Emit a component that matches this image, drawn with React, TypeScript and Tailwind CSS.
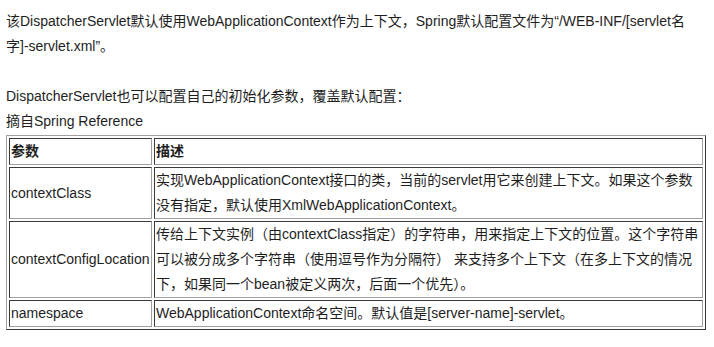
import React from 'react';

const rows: { name: string; desc: React.ReactNode }[] = [
  {
    name: 'contextClass',
    desc: (
      <>
        实现WebApplicationContext接口的类，当前的servlet用它来创建上下文。如果这个参数
        <br />
        没有指定，默认使用XmlWebApplicationContext。
      </>
    ),
  },
  {
    name: 'contextConfigLocation',
    desc: (
      <>
        传给上下文实例（由contextClass指定）的字符串，用来指定上下文的位置。这个字符串
        <br />
        可以被分成多个字符串（使用逗号作为分隔符） 来支持多个上下文（在多上下文的情况
        <br />
        下，如果同一个bean被定义两次，后面一个优先）。
      </>
    ),
  },
  {
    name: 'namespace',
    desc: <>WebApplicationContext命名空间。默认值是[server-name]-servlet。</>,
  },
];

const cell = 'border border-t-[#3a3a3a] border-l-[#3a3a3a] border-b-[#a0a0a0] border-r-[#a0a0a0] px-[1px] py-0 align-middle';

export default function App() {
  return (
    <div
      className="w-[714px] h-[347px] bg-white pl-[6px] text-[14px] text-[#1e1e1e] overflow-hidden"
      style={{ fontFamily: '"Liberation Sans", "Noto Sans CJK SC", sans-serif' }}
    >
      <p className="pt-[9px] leading-[25px] whitespace-nowrap">
        该DispatcherServlet默认使用WebApplicationContext作为上下文，Spring默认配置文件为“/WEB-INF/[servlet名
        <br />
        字]-servlet.xml”。
      </p>
      <p className="mt-[25px] leading-[25px] whitespace-nowrap">
        DispatcherServlet也可以配置自己的初始化参数，覆盖默认配置：
        <br />
        摘自Spring Reference
      </p>
      <table className="mt-[1px] w-[700px] table-fixed border-separate border-spacing-[2px] border border-t-[#a0a0a0] border-l-[#a0a0a0] border-b-[#3a3a3a] border-r-[#3a3a3a] leading-[25px]">
        <thead>
          <tr>
            <th className={`${cell} w-[143px] text-left font-bold`}>参数</th>
            <th className={`${cell} text-left font-bold`}>描述</th>
          </tr>
        </thead>
        <tbody>
          {rows.map((r) => (
            <tr key={r.name}>
              <td className={`${cell} whitespace-nowrap`}>{r.name}</td>
              <td className={`${cell} whitespace-nowrap`}>{r.desc}</td>
            </tr>
          ))}
        </tbody>
      </table>
    </div>
  );
}
